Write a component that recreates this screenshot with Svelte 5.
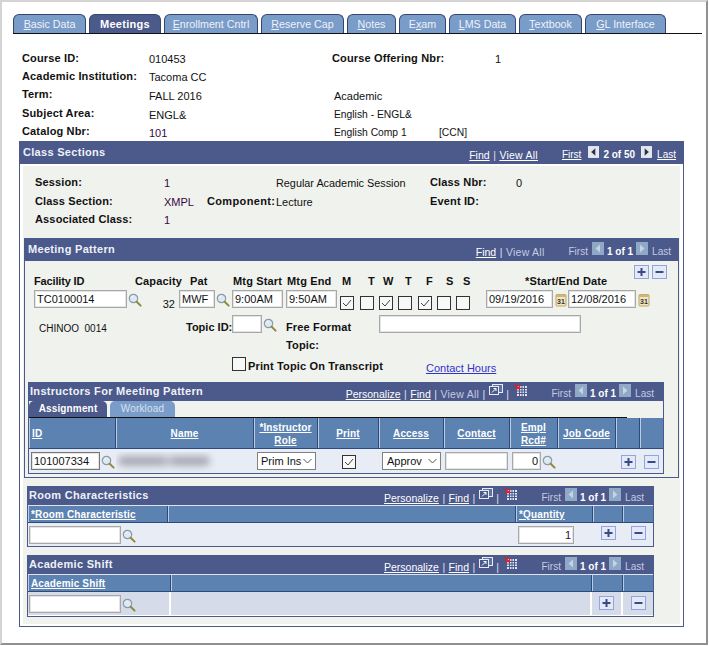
<script>
  const tabs = [
    ['B', 'asic Data'], ['', 'Meetings'], ['E', 'nrollment Cntrl'], ['R', 'eserve Cap'], ['N', 'otes'],
    ['E|x', 'am'], ['L', 'MS Data'], ['T', 'extbook'], ['G', 'L Interface']
  ];
  const days = ['M', 'T', 'W', 'T', 'F', 'S', 'S'];
  const checked = [true, false, true, false, true, false, false];
</script>

{#snippet lookup()}
  <svg class="lookup" width="14" height="14" viewBox="0 0 14 14" aria-hidden="true">
    <circle cx="5.5" cy="5.5" r="4.2" fill="#dbe9f5" stroke="#8d9aa6" stroke-width="1.2" />
    <path d="M3.5 4.5a2.5 2.5 0 0 1 2-1.5" stroke="#fff" fill="none" />
    <path d="M8.7 8.7 12.6 12.6" stroke="#8f8a3c" stroke-width="2" stroke-linecap="round" />
  </svg>
{/snippet}

{#snippet cal()}
  <svg class="cal" width="12" height="14" viewBox="0 0 12 14" aria-hidden="true">
    <rect x="1" y="1.5" width="10" height="11.5" rx="1" fill="#f3e6bd" stroke="#b9a66a" />
    <rect x="1" y="1.5" width="10" height="2.5" fill="#cdb67a" />
    <text x="6" y="11" font-size="7" font-weight="700" text-anchor="middle" fill="#333" font-family="Liberation Sans">31</text>
  </svg>
{/snippet}

{#snippet plus()}
  <svg class="pm" width="15" height="14" viewBox="0 0 15 14" aria-hidden="true">
    <rect x="0.5" y="0.5" width="14" height="13" fill="#e3e9f7" stroke="#93a5dd" />
    <path d="M3.5 7h8M7.5 3v8" stroke="#3a4a86" stroke-width="2" />
  </svg>
{/snippet}

{#snippet minus()}
  <svg class="pm" width="15" height="14" viewBox="0 0 15 14" aria-hidden="true">
    <rect x="0.5" y="0.5" width="14" height="13" fill="#e3e9f7" stroke="#93a5dd" />
    <path d="M3.5 7h8" stroke="#3a4a86" stroke-width="2" />
  </svg>
{/snippet}

{#snippet arrow(dir, on)}
  <svg class="arrow" width={on ? 11 : 12} height={on ? 12 : 13} viewBox="0 0 12 13" aria-hidden="true">
    <rect width="12" height="13" fill={on ? '#e4e8ee' : '#8fa9c6'} />
    <path d={dir === 'l' ? 'M8 2.5v8L3.5 6.5z' : 'M4 2.5v8l4.5-4z'} fill={on ? '#26304f' : '#c4d4e4'} />
  </svg>
{/snippet}

{#snippet pager(label, on)}
  <span class="pg {on ? 'lnk' : 'dim'}">First</span>
  {@render arrow('l', on)}
  <b class="count">{label}</b>
  {@render arrow('r', on)}
  <span class="pg {on ? 'lnk' : 'dim'}">Last</span>
{/snippet}

{#snippet tools()}
  <svg class="winicon" width="14" height="11" viewBox="0 0 14 11" aria-hidden="true">
    <rect x="3.5" y="0.5" width="10" height="8" fill="#5f73a3" stroke="#e6ebf5" />
    <rect x="0.5" y="2.5" width="9" height="8" fill="#4b598b" stroke="#e6ebf5" />
    <path d="M3 8.5l4-4M4.5 4.5H7V7" stroke="#fff" fill="none" />
  </svg>
  <span class="sep">|</span>
  <svg class="gridicon" width="13" height="12" viewBox="0 0 13 12" aria-hidden="true">
    <rect x="3" y="2" width="10" height="10" fill="#dfe5f5" />
    <path d="M5.5 2v10M8 2v10M10.5 2v10M3 4.5h10M3 7h10M3 9.500h10" stroke="#4b598b" />
    <path d="M0 0l5 4M1.500 4.500h4v-4" stroke="#e02020" stroke-width="1.4" fill="none" />
  </svg>
{/snippet}

<div class="page">
  <div class="tabs">
    {#each tabs as t, i}
      <div class="tab" class:active={i === 1}>
        {#if t[0].includes('|')}
          {t[0].split('|')[0]}<u>{t[0].split('|')[1]}</u>{t[1]}
        {:else}
          <u>{t[0]}</u>{t[1]}
        {/if}
      </div>
    {/each}
  </div>

  <div class="info">
    <b>Course ID:</b><span class="val">010453</span><b class="wide">Course Offering Nbr:</b><span class="val">1</span>
    <b>Academic Institution:</b><span class="val full">Tacoma CC</span>
    <b>Term:</b><span class="val d">FALL 2016</span><span class="val d in wide2">Academic</span>
    <b>Subject Area:</b><span class="val d">ENGL&amp;</span><span class="val d in wide2 small">English - ENGL&amp;</span>
    <b>Catalog Nbr:</b><span class="val d pur">101</span><span class="val d in small">English Comp 1</span><span class="val d small">[CCN]</span><span></span>
  </div>

  <section class="sections">
    <header class="bar main">
      <span class="title">Class Sections</span>
      <div class="nav">
        <span class="lnk">Find</span><span class="sep">|</span><span class="lnk va">View All</span>
        <span class="spacer"></span>
        {@render pager('2 of 50', true)}
      </div>
    </header>
    <div class="inner">
      <div class="session">
        <b>Session:</b><span class="val pur">1</span><span></span><span class="val reg">Regular Academic Session</span><b>Class Nbr:</b><span class="val">0</span>
        <b>Class Section:</b><span class="val pur">XMPL</span><b class="comp">Component:</b><span class="val">Lecture</span><b>Event ID:</b><span></span>
        <b>Associated Class:</b><span class="val pur">1</span>
      </div>

      <section class="meeting">
        <header class="bar">
          <span class="title">Meeting Pattern</span>
          <div class="nav">
            <span class="lnk">Find</span><span class="sep">|</span><span class="dim va">View All</span>
            <span class="spacer"></span>
            {@render pager('1 of 1', false)}
          </div>
        </header>
        <div class="addrow">{@render plus()}{@render minus()}</div>

        <div class="labels">
          <b class="fac">Facility ID</b><b>Capacity</b><b>Pat</b><b>Mtg Start</b><b>Mtg End</b>
          {#each days as d}<b>{d}</b>{/each}
          <b>*Start/End Date</b>
        </div>

        <div class="fields">
          <div class="pair"><input class="w93" value="TC0100014" />{@render lookup()}</div>
          <span class="val cap">32</span>
          <div class="pair"><input class="w36" value="MWF" />{@render lookup()}</div>
          <input class="w51" value="9:00AM" />
          <input class="w51" value="9:50AM" />
          {#each checked as c}
            <span class="check" class:on={c}>
              {#if c}<svg width="12" height="12" viewBox="0 0 12 12" aria-hidden="true"><path d="M2 6l3 3 5-6" fill="none" stroke="#444" /></svg>{/if}
            </span>
          {/each}
          <div class="pair"><input class="w67" value="09/19/2016" />{@render cal()}</div>
          <div class="pair"><input class="w68" value="12/08/2016" />{@render cal()}</div>
        </div>

        <div class="topic">
          <span class="val chinoo">CHINOO&nbsp;&nbsp;0014</span>
          <b class="topiclbl">Topic ID:</b>
          <div class="pair"><input class="w30" />{@render lookup()}</div>
          <b class="free">Free Format Topic:</b>
          <input class="w202" />
        </div>

        <div class="printrow">
          <span class="check"></span>
          <b class="ptext">Print Topic On Transcript</b>
          <a href="#hours" class="contact">Contact Hours</a>
        </div>

        <section class="inst">
          <header class="bar sub">
            <span class="title">Instructors For Meeting Pattern</span>
            <div class="nav">
              <span class="lnk">Personalize</span><span class="sep">|</span><span class="lnk">Find</span><span class="sep">|</span><span class="dim va">View All</span><span class="sep">|</span>
              {@render tools()}
              <span class="spacer s3"></span>
              {@render pager('1 of 1', false)}
            </div>
          </header>
          <div class="subtabs">
            <div class="stab on">Assignment</div>
            <div class="stab">Workload</div>
          </div>
          <div class="thead icols">
            <span class="left"><u>ID</u></span><span><u>Name</u></span><span><u>*Instructor<br />Role</u></span><span><u>Print</u></span><span><u>Access</u></span><span><u>Contact</u></span><span><u>Empl<br />Rcd#</u></span><span><u>Job Code</u></span><span></span><span></span>
          </div>
          <div class="irow icols">
            <div class="pair"><input class="w69 dark" value="101007334" />{@render lookup()}</div>
            <div class="blurwrap"><div class="blur"></div></div>
            <div class="sel w59"><span>Prim Ins</span><svg width="9" height="6" viewBox="0 0 9 6" aria-hidden="true"><path d="M.5 1l4 4 4-4" fill="none" stroke="#555" /></svg></div>
            <div class="mid"><span class="check on"><svg width="12" height="12" viewBox="0 0 12 12" aria-hidden="true"><path d="M2 6l3 3 5-6" fill="none" stroke="#444" /></svg></span></div>
            <div class="sel w59 acc"><span>Approv</span><svg width="9" height="6" viewBox="0 0 9 6" aria-hidden="true"><path d="M.5 1l4 4 4-4" fill="none" stroke="#555" /></svg></div>
            <input class="w63 c" />
            <div class="pair e"><input class="w29 num" value="0" />{@render lookup()}</div>
            <span></span>
            <div class="mid">{@render plus()}</div>
            <div class="mid">{@render minus()}</div>
          </div>
        </section>
      </section>

      <section class="grid room">
        <header class="bar sub">
          <span class="title">Room Characteristics</span>
          <div class="nav">
            <span class="lnk">Personalize</span><span class="sep">|</span><span class="lnk">Find</span><span class="sep">|</span>
            {@render tools()}
            <span class="spacer s3"></span>
            {@render pager('1 of 1', false)}
          </div>
        </header>
        <div class="thead rcols low">
          <span class="left"><u>*Room Characteristic</u></span><span></span><span class="left"><u>*Quantity</u></span><span></span><span></span>
        </div>
        <div class="irow rcols r2">
          <div class="pair"><input class="w92" />{@render lookup()}</div>
          <span></span>
          <input class="w56 num pur qty" value="1" />
          <div class="mid">{@render plus()}</div>
          <div class="mid">{@render minus()}</div>
        </div>
      </section>

      <section class="grid shift">
        <header class="bar sub">
          <span class="title">Academic Shift</span>
          <div class="nav">
            <span class="lnk">Personalize</span><span class="sep">|</span><span class="lnk">Find</span><span class="sep">|</span>
            {@render tools()}
            <span class="spacer s3"></span>
            {@render pager('1 of 1', false)}
          </div>
        </header>
        <div class="thead scols low">
          <span class="left"><u>Academic Shift</u></span><span></span><span></span><span></span>
        </div>
        <div class="irow scols r2 alt">
          <div class="pair"><input class="w92" />{@render lookup()}</div>
          <span class="dv dl"></span>
          <div class="mid dv">{@render plus()}</div>
          <div class="mid">{@render minus()}</div>
        </div>
      </section>
    </div>
  </section>
</div>

<style>
  :global(body) { margin: 0; background: #fff; }
  .page {
    box-sizing: border-box; width: 708px; height: 645px; background: #fff;
    font: 11px/14px "Liberation Sans", Arial, sans-serif; color: #111;
    border: 2px solid #a0a0a0; border-color: #d4d4d4 #909090 #909090 #d4d4d4;
    padding-top: 12px;
  }
  b { font-weight: 700; color: #111; letter-spacing: .15px; }

  .tabs {
    display: grid; grid-template-columns: 73px 72px 94px 83px 49px 47px 67px 63px 81px; column-gap: 3px;
    margin-left: 11px; width: 689px; height: 19px; border-bottom: 1px solid #111;
  }
  .tab {
    box-sizing: border-box; height: 19px; background: #7a9cc9; color: #eef2f8; text-align: center; font-size: 10.7px;
    border: 1px solid #34456f; border-bottom: 0; border-radius: 6px 6px 0 0; line-height: 18px;
  }
  .tab.active { background: #4b598b; color: #fff; font-weight: 700; font-size: 11px; letter-spacing: .3px; }

  .info {
    display: grid; grid-template-columns: 127px 183px 107px 56px 60px;
    grid-auto-rows: 18.2px; align-items: center; margin: 15px 0 1px 20px; height: 91px;
  }
  .info .wide { grid-column: span 2; }
  .info .full { grid-column: span 4; }
  .info .wide2 { grid-column: span 3; }
  .val { position: relative; top: 1px; }
  .val.d { top: 2px; }
  .in { padding-left: 2px; }
  .small { font-size: 10.3px; }
  .reg { font-size: 10.85px; }
  .pur { color: #35093f; }

  .sections {
    box-sizing: border-box; width: 665px; height: 486px; margin: 0 0 0 17px; border: 1px solid #4b598b; border-top: 0;
  }
  .bar {
    display: flex; align-items: center; background: #4b598b; color: #eef1f7; height: 23px; font-weight: 700;
  }
  .bar .title { padding-left: 4px; letter-spacing: .3px; position: relative; top: -1px; }
  .bar.main { margin: 0 -1px; }
  .bar.sub { height: 19px; }
  .bar.sub .title { padding-left: 2px; }
  .nav {
    display: flex; align-items: center; gap: 4px; margin-left: auto; padding-right: 8px;
    font-weight: 400; font-size: 10.5px; color: #eef1f7;
  }
  .inst .nav, .grid .nav { padding-right: 10px; }
  .nav svg { flex: none; }
  .nav span, .nav .count { position: relative; top: 2px; }
  .lnk { text-decoration: underline; color: #fff; }
  .dim { color: #c4cce0; }
  .pg { font-size: 10px; }
  .va { letter-spacing: .25px; }
  .sep { color: #dde3ef; margin: 0 -.5px; }
  .spacer { width: 16px; }
  .s3 { width: 17px; }
  .count { color: #fff; letter-spacing: 0; font-size: 10px; margin: 0 -1px; }
  .arrow { position: relative; top: -1px; }
  .main .arrow { margin: 0 1px 0 3px; }
  .main .count + .arrow { margin: 0 1px 0 3px; }
  .winicon { position: relative; top: -2px; }
  .gridicon { position: relative; top: -2px; margin-left: 1px; }

  .inner { background: #f0f2ee; margin: 2px 3px 0; height: 458px; padding-top: 7px; box-sizing: border-box; }
  .session {
    display: grid; grid-template-columns: 129px 43px 69px 154px 86px 40px;
    grid-template-rows: 18px 19px 18px; align-items: center; margin-left: 12px;
  }
  .comp { letter-spacing: .35px; }
  .meeting {
    box-sizing: border-box; width: 655px; height: 240px; margin: 10px 0 0 1px;
    border: 1px solid #4b598b; border-top: 0;
  }
  .meeting > .bar { margin: 0 -1px; }

  .addrow { display: flex; justify-content: flex-end; gap: 3px; margin: 4px 11px -5px 0; height: 14px; }
  .labels {
    display: grid;
    grid-template-columns: 101px 55px 43px 54px 55px 26px 15px 22px 21px 20px 17px 62px auto;
    margin-left: 9px; height: 14px;
  }
  .fac { letter-spacing: -.15px; }
  .fields {
    display: grid;
    grid-template-columns: 107px 38px 53px 54px 54px 20px 19px 19px 20px 19px 19px 30px 82px auto;
    margin: 2px 0 0 9px; height: 18px;
  }
  .pair { display: flex; align-items: flex-start; gap: 1px; }
  .lookup { flex: none; margin-top: 3px; }
  .cal { flex: none; margin: 3px 0 0 1px; }
  input {
    box-sizing: border-box; height: 18px; padding: 0 0 0 2px; margin: 0; background: #fff; color: #111;
    border: 1px solid #a8a8a8; box-shadow: inset 0 0 0 1px #e4e4e4; border-radius: 0;
    font: 11px "Liberation Sans", Arial, sans-serif; outline: none;
  }
  .w93 { width: 93px; } .w36 { width: 36px; } .w51 { width: 51px; } .w67 { width: 67px; } .w68 { width: 68px; }
  .w30 { width: 30px; } .w202 { width: 202px; } .w69 { width: 69px; } .w63 { width: 63px; } .w29 { width: 29px; }
  .w92 { width: 92px; } .w56 { width: 56px; }
  .num { text-align: right; padding-right: 2px; }
  .qty { margin-left: 2px; }
  .cap { top: 0; padding: 7px 4px 0 0; text-align: right; }
  .check {
    box-sizing: border-box; width: 14px; height: 14px; border: 1px solid #333; background: #f8f8f8;
    display: flex; align-items: center; justify-content: center; margin-top: 6px;
  }
  .topic {
    display: grid; grid-template-columns: 147px 46px 54px 93px auto; margin: 7px 0 0 14px; height: 39px;
  }
  .chinoo { top: 0; padding-top: 7px; font-size: 10px; }
  .topiclbl { padding-top: 5px; white-space: nowrap; letter-spacing: 0; }
  .free { line-height: 18px; padding-top: 3px; width: 80px; }
  .printrow { display: flex; align-items: center; margin: 3px 0 0 207px; height: 14px; }
  .printrow .check { margin: 0 2px 0 0; }
  .ptext { position: relative; top: 2px; }
  .contact { margin-left: 43px; color: #3333cc; position: relative; top: 4px; }

  .inst {
    box-sizing: border-box; width: 636px; height: 92px; margin: 11px 0 0 3px;
    border: 1px solid #4b598b; border-top: 0;
  }
  .inst .bar { margin: 0 -1px; }
  .subtabs { display: flex; gap: 3px; height: 16px; width: 598px; border-bottom: 1px solid #111; }
  .stab {
    box-sizing: border-box; height: 16px; width: 65px; background: #7a9cc9; color: #d8e1ee;
    border-radius: 5px 5px 0 0; text-align: center; line-height: 16px; font-size: 10px; letter-spacing: .15px;
  }
  .stab.on { width: 78px; background: #4b598b; color: #fff; font-weight: 700; }
  .thead { display: grid; height: 31px; background: #5b82b1; border-bottom: 1px solid #2c4a7e; box-sizing: border-box; }
  .thead span {
    display: flex; align-items: center; justify-content: center; text-align: center; color: #fff; font-weight: 700;
    font-size: 10px; letter-spacing: .15px; padding-top: 1px; box-sizing: border-box;
    border-right: 1px solid #2c4a7e; box-shadow: inset 1px 0 0 #bccbde; line-height: 13px;
  }
  .thead span:last-child { border-right: 0; }
  .thead .left { justify-content: flex-start; padding-left: 3px; }
  .low { height: 18px; }
  .icols { grid-template-columns: 87px 138px 64px 61px 65px 66px 48px 58px 24px 23px; }
  .irow { display: grid; height: 24px; background: #e8ecf5; align-items: start; padding-top: 3px; box-sizing: border-box; }
  .irow.icols > :first-child { margin-left: 2px; }
  .mid { display: flex; justify-content: center; padding-top: 3px; }
  .mid .check { margin-top: 0; }
  .c { margin-left: 1px; }
  .e { margin-left: 2px; }
  .dark { border-color: #777; }
  .blurwrap { height: 20px; overflow: hidden; }
  .blur {
    width: 92px; height: 10px; margin: 4px 0 0 2px; border-radius: 5px; filter: blur(3.5px);
    background: linear-gradient(90deg, #a8abb3 0 48%, #c4c8d0 54%, #a8abb3 62% 100%);
  }
  .sel {
    box-sizing: border-box; height: 18px; margin-left: 3px; display: flex; align-items: center; justify-content: space-between;
    padding: 0 3px; white-space: nowrap; background: #fff; border: 1px solid #808080;
  }
  .w59 { width: 59px; }
  .acc { padding-left: 4px; }

  .grid {
    box-sizing: border-box; width: 627px; margin: 8px 0 0 4px;
    border: 1px solid #4b598b; border-top: 0;
  }
  .grid .bar { margin: 0 -1px; }
  .grid .thead { border-top: 1px solid #dde4ee; }
  .rcols { grid-template-columns: 140px 348px 77px 30px 30px; }
  .scols { grid-template-columns: 143px 421px 31px 30px; }
  .r2 { height: 23px; }
  .r2 > :first-child { margin-left: 1px; }
  .r2 .mid { padding-top: 0; }
  .alt { height: 24px; background: #d5dbe8; box-shadow: inset 0 -1px 0 #fff; }
  .dv { border-right: 2px solid #fff; height: 24px; margin-top: -3px; box-sizing: border-box; }
  .mid.dv { padding-top: 4px; }
  .alt .mid:last-child { padding-top: 1px; }
  .dl { border-left: 2px solid #fff; margin-left: -2px; }
</style>
